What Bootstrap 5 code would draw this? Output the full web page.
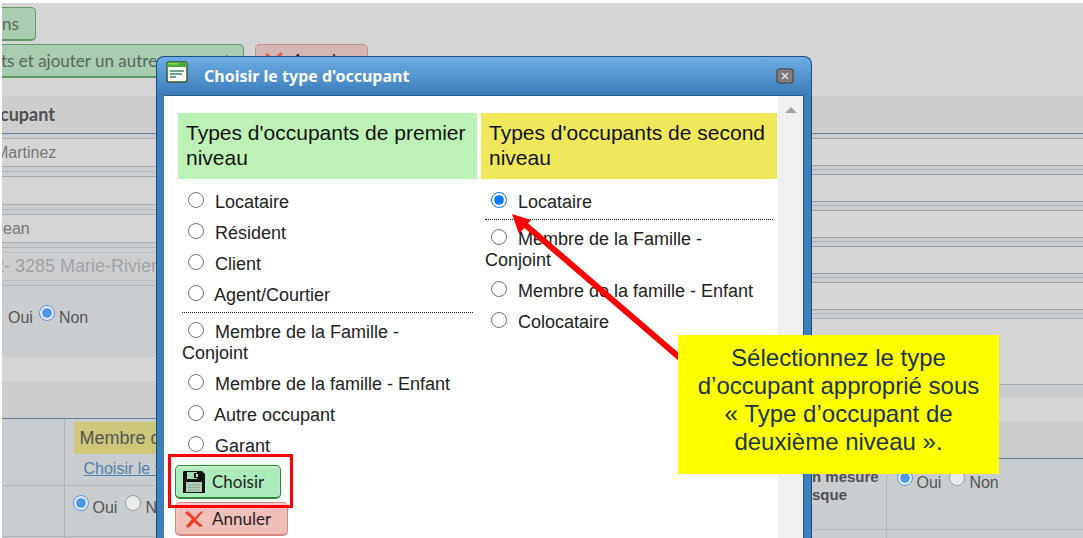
<!DOCTYPE html>
<html lang="fr">
<head>
<meta charset="utf-8">
<meta name="viewport" content="width=device-width, initial-scale=1">
<title>Choisir le type d'occupant</title>
<link href="https://cdn.jsdelivr.net/npm/bootstrap@5.3.0/dist/css/bootstrap.min.css" rel="stylesheet">
<script src="https://cdn.jsdelivr.net/npm/bootstrap@5.3.0/dist/js/bootstrap.bundle.min.js"></script>
<style>
  body { font-family: "Liberation Sans", sans-serif; font-size: 16px; line-height: 20px; background: #fff; color: #222; }
  .stage { height: 100vh; padding: 3px 0 0 2px; }
  .page-back { background: #d5d5d5; color: #555; height: 100%; }
  .side-pane { width: 271px; }
  .btn-app { font-family: Lato, sans-serif; font-size: 17px; line-height: 22px; padding: 5px 16px 5px 7px; border-radius: 5px; height: 34px; color: #222; display: inline-flex; align-items: center; gap: 7px; white-space: nowrap; }
  .btn-go { background: #abebbc; border: 1px solid #2b8a35; border-bottom-width: 2px; box-shadow: inset 0 2px 2px #c3f5cf; }
  .btn-stop { background: #f1bfba; border: 1px solid #d98580; border-bottom-width: 2px; box-shadow: inset 0 2px 2px #f6cfcb; }
  .btn-go.dimmed { background: #a9ccb1; border-color: #5f9a66; box-shadow: none; color: #5a665c; }
  .btn-stop.dimmed { background: #d3b5b3; border-color: #c48f8c; box-shadow: none; }
  .bleed { margin-left: -8px; }
  .top-actions { gap: 11px; margin: 3px 0 18px -8px; }
  .save-more { width: 250px; padding-left: 6px; overflow: hidden; justify-content: flex-start; }
  .band { background: #cdcdcd; height: 38px; border-bottom: 1px solid #5f7f9f; font: bold 18px/36px Lato, sans-serif; color: #505050; padding-left: 6px; }
  .fields { background: #cacdd0; }
  .field-row { height: 38px; padding-top: 4px; border-bottom: 1px solid #b0b5b9; }
  .side-pane .field-row { height: 36px; }
  .field-row input, .note-row textarea { display: block; width: 100%; height: 29px; border: solid #a9acae; border-width: 1px 0; background: #d5d5d5; color: #777; border-radius: 0; padding: 0 0 0 1px; }
  .side-pane .field-row input { height: 28px; border-color: #999c9d; }
  .field-row input:disabled { background: #cdced0; color: #a0a3a5; font-size: 18px; padding: 0; border-color: #bbbec1; }
  .note-row { padding-top: 4px; padding-bottom: 12px; }
  .note-row textarea { height: 67px; resize: none; }
  input[type=radio] { width: 16px; height: 16px; margin: 0; flex: none; }
  .page-back input[type=radio] { opacity: .6; position: relative; top: -3px; }
  .answers { height: 71px; padding: 22px 0 0 14px; }
  .answers input { margin: 0 0 0 2px; }
  .grid-table { width: 100%; background: #cacdd0; }
  .grid-table td, .grid-table th { border: solid #b3b6b9; border-width: 0 0 1px; vertical-align: top; padding: 0; }
  .grid-table td + td, .grid-table th + td { border-left-width: 1px; }
  .tag-second { background: #cdc779; font-size: 18px; line-height: 32px; padding-left: 6px; }
  .lead-cell { width: 62px; }
  .row-kind { height: 66px; }
  .row-kind .tag-second { margin: 3px 0 5px 9px; }
  .row-kind a { margin-left: 19px; }
  .row-yes { height: 51px; }
  .row-yes td > div { padding: 12px 0 0 8px; }
  .row-risk { height: 70px; }
  .row-risk th { width: 74px; padding: 9px 0 0; line-height: 18px; font-size: 15px; color: #505050; white-space: nowrap; }
  .row-risk td > div { padding: 14px 0 0 10px; }
  .page-back a { color: #5080a5; }
  .dialog-box { position: absolute; left: 156px; right: 271px; top: 56px; bottom: 0; background: #3d7fbb; border: solid #1d4f7c; border-width: 1px 1px 0; border-radius: 8px 8px 0 0; }
  .dialog-head { height: 38px; border-radius: 7px 7px 0 0; background: linear-gradient(#6cade5, #3b7dba); color: #fff; padding: 0 17px 0 9px; gap: 16px; }
  .dialog-title { font: bold 16px/20px "Noto Sans", sans-serif; }
  .dialog-frame { margin: 0 7px; border: solid #2b5d8b; border-width: 1px 1px 0 0; background: #fff; min-height: 0; }
  .bar { width: 25px; background: #f0f0f0; }
  .kind-first, .kind-second { font-size: 21px; line-height: 25px; font-weight: 400; padding: 7px 8px 9px; height: 66px; margin: 0; color: #111; }
  .kind-first { background: #bdf2b6; }
  .kind-second { background: #efe85b; }
  .kinds { display: grid; grid-template-columns: 299fr 296fr; column-gap: 4px; padding: 17px 1px 0 14px; }
  .choices { font-size: 18px; line-height: 21px; padding: 8px 4px 0 4px; }
  .choices label { display: block; padding: 5px 0; }
  .choices input { margin: 0 6px 0 6px; vertical-align: 0; }
  .parting { border-top: 1px dotted #222; padding-top: 4px; margin-top: 1px; }
  .actions { gap: 3px; padding: 3px 0 0 11px; }
  .frame-mark { position: absolute; left: 168px; top: 454px; width: 125px; height: 54px; border: 3px solid #f00; pointer-events: none; }
  .pointer { position: absolute; left: 500px; top: 200px; pointer-events: none; }
  .callout { position: absolute; right: 84px; top: 335px; width: 321px; padding: 9px 12px 18px; background: #ff0; color: #1c3347; font-size: 24px; line-height: 28px; text-align: center; }
</style>
</head>
<body>
<div class="stage position-relative overflow-hidden">
  <main class="page-back d-flex flex-column overflow-hidden">
    <div class="pt-1 d-flex"><button type="button" class="btn-app btn-go dimmed border-start-0 rounded-start-0 ps-0">ns</button></div>
    <div class="top-actions d-flex">
      <button type="button" class="btn-app btn-go dimmed save-more">ts et ajouter un autre occupant</button>
      <button type="button" class="btn-app btn-stop dimmed"><svg width="22" height="18" viewBox="0 0 20 18" aria-hidden="true"><path d="M2 2Q10 8 18 16M18 1Q9 8 3 16" stroke="#dd6557" stroke-width="3" fill="none"/></svg>Annuler</button>
    </div>
    <div class="d-flex align-items-start">
      <section class="flex-grow-1 overflow-hidden">
        <div class="bleed">
          <div class="band">cupant</div>
          <div class="fields">
            <div class="field-row"><input value="Martinez" aria-label="Nom"></div>
            <div class="field-row"><input aria-label="Deuxième nom"></div>
            <div class="field-row"><input value="Jean" aria-label="Prénom"></div>
            <div class="field-row"><input value="2- 3285 Marie-Rivier" disabled aria-label="Adresse"></div>
            <div class="answers d-flex align-items-start gap-1">
              <span>Oui</span><input type="radio" name="q1" id="q1n" checked><label for="q1n">Non</label>
            </div>
          </div>
        </div>
        <div class="band mt-4"></div>
        <table class="grid-table">
          <tr class="row-kind"><td class="lead-cell"></td><td><div class="tag-second">Membre de</div><a class="d-block" href="#type">Choisir le type</a></td></tr>
          <tr class="row-yes"><td></td><td><div class="d-flex gap-1"><input type="radio" name="q2" id="q2o" checked><label for="q2o">Oui</label><input class="ms-1" type="radio" name="q2" id="q2n"><label for="q2n">Non</label></div></td></tr>
          <tr><td>&nbsp;</td><td></td></tr>
        </table>
      </section>
      <section class="side-pane">
        <div class="band"></div>
        <div class="fields">
          <div class="field-row"><input aria-label="Champ 1"></div>
          <div class="field-row"><input aria-label="Champ 2"></div>
          <div class="field-row"><input aria-label="Champ 3"></div>
          <div class="field-row"><input aria-label="Champ 4"></div>
          <div class="field-row"><input aria-label="Champ 5"></div>
          <div class="note-row"><textarea aria-label="Notes"></textarea></div>
        </div>
        <div class="band mt-4"></div>
        <table class="grid-table">
          <tr class="row-risk"><th scope="row">n mesure<br>sque</th><td><div class="d-flex gap-1"><input type="radio" name="q3" id="q3o" checked><label for="q3o">Oui</label><input class="ms-1" type="radio" name="q3" id="q3n"><label for="q3n">Non</label></div></td></tr>
          <tr><td>&nbsp;</td><td></td></tr>
        </table>
      </section>
    </div>
  </main>

  <div class="dialog-box d-flex flex-column overflow-hidden" role="dialog" aria-labelledby="dlg">
    <header class="dialog-head d-flex align-items-center flex-shrink-0">
      <svg class="mb-2" width="22" height="22" viewBox="0 0 22 22" aria-hidden="true"><rect x="1" y="1" width="20" height="20" rx="2" fill="#fbfdf4" stroke="#355b2a" stroke-width="1.5"/><path d="M1.5 1.5h19V6h-19z" fill="#4caf35"/><path d="M2 2h18v1.5H2z" fill="#85d45c"/><path d="M13 3h2M16 3h3" stroke="#1d6420"/><path d="M4 10h14M4 13h12M4 16h6" stroke="#3c8a62" stroke-width="1.6"/></svg>
      <h1 class="dialog-title m-0 flex-grow-1" id="dlg">Choisir le type d'occupant</h1>
      <button type="button" class="border-0 bg-transparent p-0 d-flex" aria-label="Fermer"><svg width="18" height="16" viewBox="0 0 18 16"><rect x="1" y="1" width="16" height="14" rx="3" fill="#777" stroke="#555" stroke-width="1.5"/><rect x="3" y="2.5" width="12" height="11" rx="2" fill="none" stroke="#8d8d8d"/><path d="M6 5l6 6M12 5l-6 6" stroke="#ddd" stroke-width="1.7"/></svg></button>
    </header>
    <div class="dialog-frame d-flex flex-grow-1 overflow-hidden">
      <form class="flex-grow-1">
        <div class="kinds">
          <div>
            <h2 class="kind-first">Types d'occupants de premier niveau</h2>
            <div class="choices">
              <label><input type="radio" name="first"> Locataire</label>
              <label><input type="radio" name="first"> Résident</label>
              <label><input type="radio" name="first"> Client</label>
              <label><input type="radio" name="first"> Agent/Courtier</label>
              <div class="parting">
                <label><input type="radio" name="first"> Membre de la Famille -<br>Conjoint</label>
                <label><input type="radio" name="first"> Membre de la famille - Enfant</label>
                <label><input type="radio" name="first"> Autre occupant</label>
                <label><input type="radio" name="first"> Garant</label>
              </div>
            </div>
          </div>
          <div>
            <h2 class="kind-second">Types d'occupants de second niveau</h2>
            <div class="choices">
              <label><input type="radio" name="second" checked> Locataire</label>
              <div class="parting">
                <label><input type="radio" name="second"> Membre de la Famille -<br>Conjoint</label>
                <label><input type="radio" name="second"> Membre de la famille - Enfant</label>
                <label><input type="radio" name="second"> Colocataire</label>
              </div>
            </div>
          </div>
        </div>
        <div class="actions d-flex flex-column align-items-start">
          <button type="button" class="btn-app btn-go"><svg width="22" height="22" viewBox="0 0 22 22" aria-hidden="true"><path d="M1 0h18l3 3v19H0V1z" fill="#111"/><path d="M4 1h10v7H4z" fill="#a5d9b1"/><path d="M11 2h4v5h-4z" fill="#111"/><path d="M13 3h2v3h-2z" fill="#ddd"/><path d="M3 11h16v10H3z" fill="#b4cdb9"/><path d="M5 14h12M5 16.500h12M5 19h12" stroke="#8aa990"/></svg>Choisir</button>
          <button type="button" class="btn-app btn-stop"><svg width="22" height="18" viewBox="0 0 22 18" aria-hidden="true"><path d="M2 3L5 1Q10 6 12 8Q16 3 19 1L20 2Q16 6 13 10L20 16L17 17L11 12Q8 16 5 18L3 16Q6 13 9 9Q6 6 2 3z" fill="#f8371b"/></svg>Annuler</button>
        </div>
      </form>
      <div class="bar flex-shrink-0 text-center"><svg class="d-block mx-auto mt-2" width="12" height="12" viewBox="0 0 12 12" aria-hidden="true"><path d="M0 9L6 3L12 9z" fill="#a2a2a2"/></svg></div>
    </div>
  </div>

  <div class="frame-mark"></div>
  <svg class="pointer" width="190" height="165" viewBox="0 0 190 165" aria-hidden="true"><path d="M22 22L180 158" stroke="#f00" stroke-width="6"/><path d="M12 14L31 20L19 34z" fill="#f00"/></svg>
  <div class="callout">Sélectionnez le type d’occupant approprié sous «&nbsp;Type d’occupant de deuxième niveau&nbsp;».</div>
</div>
</body>
</html>
